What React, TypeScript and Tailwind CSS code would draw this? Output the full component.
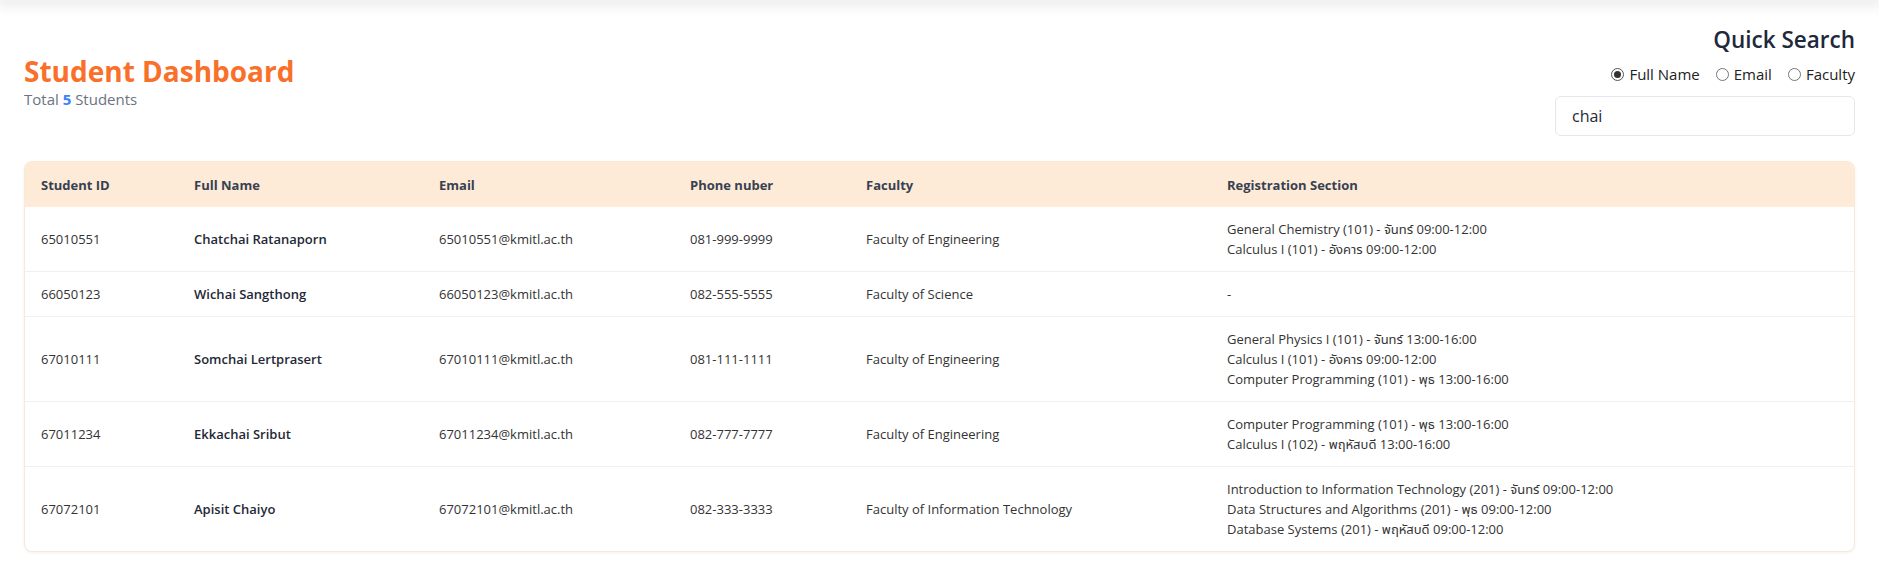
import React from "react";

type Student = {
  id: string;
  name: string;
  email: string;
  phone: string;
  faculty: string;
  sections: string[];
};

const students: Student[] = [
  {
    id: "65010551",
    name: "Chatchai Ratanaporn",
    email: "65010551@kmitl.ac.th",
    phone: "081-999-9999",
    faculty: "Faculty of Engineering",
    sections: [
      "General Chemistry (101) - จันทร์ 09:00-12:00",
      "Calculus I (101) - อังคาร 09:00-12:00",
    ],
  },
  {
    id: "66050123",
    name: "Wichai Sangthong",
    email: "66050123@kmitl.ac.th",
    phone: "082-555-5555",
    faculty: "Faculty of Science",
    sections: ["-"],
  },
  {
    id: "67010111",
    name: "Somchai Lertprasert",
    email: "67010111@kmitl.ac.th",
    phone: "081-111-1111",
    faculty: "Faculty of Engineering",
    sections: [
      "General Physics I (101) - จันทร์ 13:00-16:00",
      "Calculus I (101) - อังคาร 09:00-12:00",
      "Computer Programming (101) - พุธ 13:00-16:00",
    ],
  },
  {
    id: "67011234",
    name: "Ekkachai Sribut",
    email: "67011234@kmitl.ac.th",
    phone: "082-777-7777",
    faculty: "Faculty of Engineering",
    sections: [
      "Computer Programming (101) - พุธ 13:00-16:00",
      "Calculus I (102) - พฤหัสบดี 13:00-16:00",
    ],
  },
  {
    id: "67072101",
    name: "Apisit Chaiyo",
    email: "67072101@kmitl.ac.th",
    phone: "082-333-3333",
    faculty: "Faculty of Information Technology",
    sections: [
      "Introduction to Information Technology (201) - จันทร์ 09:00-12:00",
      "Data Structures and Algorithms (201) - พุธ 09:00-12:00",
      "Database Systems (201) - พฤหัสบดี 09:00-12:00",
    ],
  },
];

function Radio({ label, checked }: { label: string; checked?: boolean }) {
  return (
    <label className="flex items-center gap-[5px]">
      <span
        className={
          checked
            ? "flex h-[13px] w-[13px] items-center justify-center rounded-full border border-[#555]"
            : "flex h-[13px] w-[13px] items-center justify-center rounded-full border border-[#767676]"
        }
      >
        {checked ? <span className="h-[7px] w-[7px] rounded-full bg-[#333]" /> : null}
      </span>
      <span>{label}</span>
    </label>
  );
}

export default function App() {
  return (
    <div className="min-h-[574px] bg-white font-['Open_Sans','Noto_Sans_Thai','Noto_Sans',sans-serif] text-[#333]">
      <div className="h-0 shadow-[0_0_14px_4px_rgba(0,0,0,0.13)]" />
      <div className="px-6 pt-6">
        <div className="flex items-center justify-between">
          <div className="pt-[2px]">
            <h1 className="text-[28px] font-bold leading-[36px] text-[#f9702a]">Student Dashboard</h1>
            <p className="text-[15px] leading-[20px] text-[#6b7280]">
              Total <span className="font-bold text-[#3b82f6]">5</span> Students
            </p>
          </div>
          <div className="flex flex-col items-end">
            <h2 className="text-[22.5px] font-semibold leading-[32px] text-[#1e293b]">Quick Search</h2>
            <div className="mt-2 flex items-center gap-[16px] text-[15px] leading-[20px] text-[#222]">
              <Radio label="Full Name" checked />
              <Radio label="Email" />
              <Radio label="Faculty" />
            </div>
            <div className="mt-3 flex h-10 w-[300px] items-center rounded-md border border-[#e5e7eb] bg-white px-4 text-[16px] text-[#1f2937]">
              chai
            </div>
          </div>
        </div>

        <div className="mt-[25px] overflow-hidden rounded-lg border border-[#fbe9d5] bg-white shadow-[0_1px_3px_rgba(0,0,0,0.06)]">
          <table className="w-full table-fixed border-collapse text-left text-[13px] leading-[20px]">
            <colgroup>
              <col className="w-[153px]" />
              <col className="w-[245px]" />
              <col className="w-[251px]" />
              <col className="w-[176px]" />
              <col className="w-[361px]" />
              <col />
            </colgroup>
            <thead>
              <tr className="h-[45px] bg-[#feebd7] text-[#374151]">
                <th className="px-4 font-bold">Student ID</th>
                <th className="px-4 font-bold">Full Name</th>
                <th className="px-4 font-bold">Email</th>
                <th className="px-4 font-bold">Phone nuber</th>
                <th className="px-4 font-bold">Faculty</th>
                <th className="px-4 font-bold">Registration Section</th>
              </tr>
            </thead>
            <tbody>
              {students.map((s, i) => (
                <tr
                  key={s.id}
                  className={i < students.length - 1 ? "border-b border-[#f0f0f0] align-middle" : "align-middle"}
                >
                  <td className="px-4 py-3 text-[#333]">{s.id}</td>
                  <td className="px-4 py-3 font-semibold text-[#1f2937]">{s.name}</td>
                  <td className="px-4 py-3 text-[#333]">{s.email}</td>
                  <td className="px-4 py-3 text-[#333]">{s.phone}</td>
                  <td className="px-4 py-3 text-[#333]">{s.faculty}</td>
                  <td className="px-4 py-3 text-[#333]">
                    {s.sections.map((line) => (
                      <div key={line}>{line}</div>
                    ))}
                  </td>
                </tr>
              ))}
            </tbody>
          </table>
        </div>
      </div>
    </div>
  );
}
